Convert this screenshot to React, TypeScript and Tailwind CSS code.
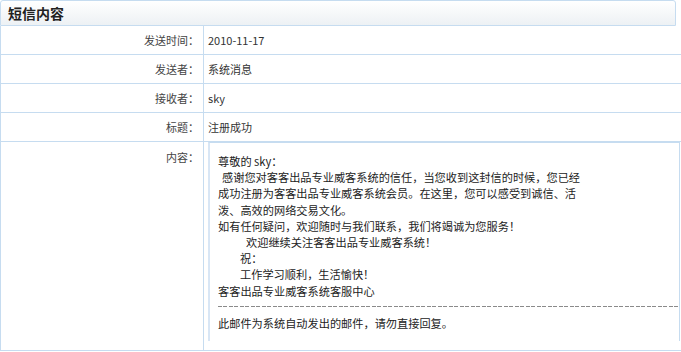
const rows = [
  { label: "发送时间：", value: "2010-11-17" },
  { label: "发送者：", value: "系统消息" },
  { label: "接收者：", value: "sky" },
  { label: "标题：", value: "注册成功" },
]

const lines: { text: string; indent: string }[] = [
  { text: "尊敬的 sky：", indent: "pl-0" },
  { text: "感谢您对客客出品专业威客系统的信任，当您收到这封信的时候，您已经", indent: "pl-[4px]" },
  { text: "成功注册为客客出品专业威客系统会员。在这里，您可以感受到诚信、活", indent: "pl-0" },
  { text: "泼、高效的网络交易文化。", indent: "pl-0" },
  { text: "如有任何疑问，欢迎随时与我们联系，我们将竭诚为您服务！", indent: "pl-0" },
  { text: "欢迎继续关注客客出品专业威客系统！", indent: "pl-[28px]" },
  { text: "祝：", indent: "pl-[22px]" },
  { text: "工作学习顺利，生活愉快！", indent: "pl-[22px]" },
  { text: "客客出品专业威客系统客服中心", indent: "pl-0" },
]

export default function App() {
  return (
    <div className="w-[681px] h-[352px] overflow-hidden bg-white font-['Noto_Sans_CJK_SC',sans-serif] text-[11px] text-[#333]">
      {/* Header */}
      <div className="w-[676px] h-[26px] border border-[#c6dcf0] rounded-t-[3px] bg-gradient-to-b from-white to-[#edf1f4] flex items-center pl-[7px] text-[14px] font-bold text-[#222]">
        短信内容
      </div>

      {/* Table */}
      <div className="w-[681px] border-l border-[#c6dcf0]">
        {rows.map((r) => (
          <div key={r.label} className="flex h-[29px] border-b border-[#c6dcf0]">
            <div className="w-[203px] shrink-0 border-r border-[#c6dcf0] flex items-center justify-end pr-[4px] text-[#444]">
              {r.label}
            </div>
            <div className="flex items-center pl-[4px]">{r.value}</div>
          </div>
        ))}

        {/* Content row */}
        <div className="flex h-[209px] border-b border-[#c6dcf0]">
          <div className="w-[203px] shrink-0 border-r border-[#c6dcf0] flex justify-end pt-[7px] pr-[4px] text-[#444]">
            内容：
          </div>
          <div className="pl-[4px]">
            <div className="w-[472px] h-[199px] overflow-hidden border-t border-r border-l-2 border-t-[#c6dcf0] border-r-[#c6dcf0] border-l-[#d8e6f5] pt-[10px] pl-[8px] leading-[16.2px] text-[11.2px] text-[#222]">
              {lines.map((l, i) => (
                <div key={i} className={`whitespace-pre ${l.indent}`}>
                  {l.text}
                </div>
              ))}
              {/* dashed separator */}
              <div className="h-[16.2px] flex items-center">
                <div className="w-full h-px bg-[repeating-linear-gradient(90deg,#8a8a8a_0_4px,transparent_4px_5.5px)]" />
              </div>
              <div className="whitespace-pre">此邮件为系统自动发出的邮件，请勿直接回复。</div>
            </div>
          </div>
        </div>
      </div>
    </div>
  )
}
